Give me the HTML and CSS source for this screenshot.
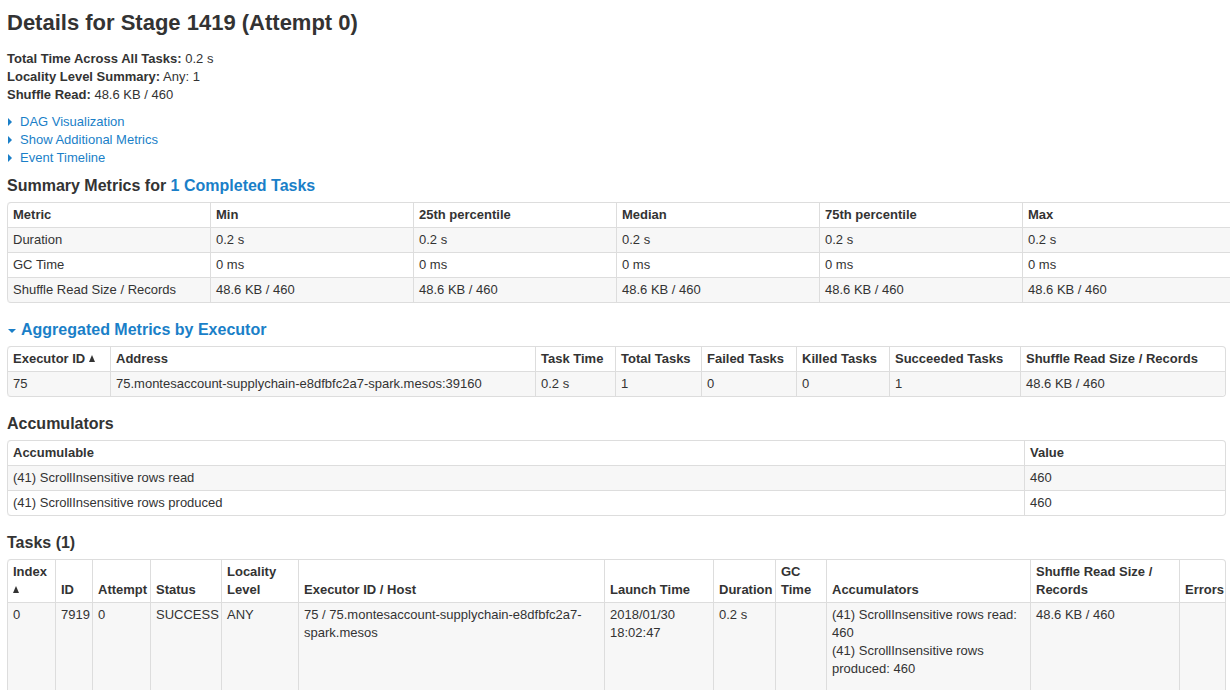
FILE: index.html
```html
<!DOCTYPE html>
<html>
<head>
<meta charset="utf-8">
<link rel="stylesheet" href="styles.css">
<title>Stage 1419</title>
</head>
<body>
<div class="page">
  <h3 class="title">Details for Stage 1419 (Attempt 0)</h3>
  <ul class="summary">
    <li><strong>Total Time Across All Tasks:</strong> 0.2 s</li>
    <li><strong>Locality Level Summary:</strong> Any: 1</li>
    <li><strong>Shuffle Read:</strong> 48.6 KB / 460</li>
  </ul>
  <ul class="toggles">
    <li><span class="arrow-right"></span><a href="#">DAG Visualization</a></li>
    <li><span class="arrow-right"></span><a href="#">Show Additional Metrics</a></li>
    <li><span class="arrow-right"></span><a href="#">Event Timeline</a></li>
  </ul>

  <h4 class="section first">Summary Metrics for <a href="#">1 Completed Tasks</a></h4>
  <table class="tbl t-summary">
    <colgroup><col class="w203"><col class="w203"><col class="w203"><col class="w203"><col class="w203"><col class="w213"></colgroup>
    <thead><tr><th>Metric</th><th>Min</th><th>25th percentile</th><th>Median</th><th>75th percentile</th><th>Max</th></tr></thead>
    <tbody>
      <tr><td>Duration</td><td>0.2 s</td><td>0.2 s</td><td>0.2 s</td><td>0.2 s</td><td>0.2 s</td></tr>
      <tr><td>GC Time</td><td>0 ms</td><td>0 ms</td><td>0 ms</td><td>0 ms</td><td>0 ms</td></tr>
      <tr><td>Shuffle Read Size / Records</td><td>48.6 KB / 460</td><td>48.6 KB / 460</td><td>48.6 KB / 460</td><td>48.6 KB / 460</td><td>48.6 KB / 460</td></tr>
    </tbody>
  </table>

  <h4 class="section link-head"><span class="arrow-down"></span><a href="#">Aggregated Metrics by Executor</a></h4>
  <table class="tbl t-exec">
    <colgroup><col class="e1"><col class="e2"><col class="e3"><col class="e4"><col class="e5"><col class="e6"><col class="e7"><col class="e8"></colgroup>
    <thead><tr><th>Executor ID <span class="sort"></span></th><th>Address</th><th>Task Time</th><th>Total Tasks</th><th>Failed Tasks</th><th>Killed Tasks</th><th>Succeeded Tasks</th><th>Shuffle Read Size / Records</th></tr></thead>
    <tbody>
      <tr><td>75</td><td>75.montesaccount-supplychain-e8dfbfc2a7-spark.mesos:39160</td><td>0.2 s</td><td>1</td><td>0</td><td>0</td><td>1</td><td>48.6 KB / 460</td></tr>
    </tbody>
  </table>

  <h4 class="section">Accumulators</h4>
  <table class="tbl t-acc">
    <colgroup><col class="a1"><col class="a2"></colgroup>
    <thead><tr><th>Accumulable</th><th>Value</th></tr></thead>
    <tbody>
      <tr><td>(41) ScrollInsensitive rows read</td><td>460</td></tr>
      <tr><td>(41) ScrollInsensitive rows produced</td><td>460</td></tr>
    </tbody>
  </table>

  <h4 class="section">Tasks (1)</h4>
  <table class="tbl t-tasks">
    <colgroup><col class="k1"><col class="k2"><col class="k3"><col class="k4"><col class="k5"><col class="k6"><col class="k7"><col class="k8"><col class="k9"><col class="k10"><col class="k11"><col class="k12"></colgroup>
    <thead><tr><th>Index <span class="sort"></span></th><th>ID</th><th>Attempt</th><th>Status</th><th>Locality Level</th><th>Executor ID / Host</th><th>Launch Time</th><th>Duration</th><th>GC Time</th><th>Accumulators</th><th>Shuffle Read Size / Records</th><th>Errors</th></tr></thead>
    <tbody>
      <tr class="tall"><td>0</td><td>7919</td><td>0</td><td>SUCCESS</td><td>ANY</td><td>75 / 75.montesaccount-supplychain-e8dfbfc2a7-spark.mesos</td><td>2018/01/30 18:02:47</td><td>0.2 s</td><td></td><td>(41) ScrollInsensitive rows read: 460<br>(41) ScrollInsensitive rows produced: 460</td><td>48.6 KB / 460</td><td></td></tr>
    </tbody>
  </table>
</div>
</body>
</html>
```

FILE: styles.css
```css
html, body {
  margin: 0;
  padding: 0;
  overflow: hidden;
  background: #fff;
}
body {
  font-family: "Liberation Sans", Arial, Helvetica, sans-serif;
  font-size: 13px;
  line-height: 18px;
  color: #333;
}
a {
  color: #1a7fc8;
  text-decoration: none;
}
.page {
  padding: 0 0 0 7px;
}
.title {
  margin: 8px 0 0 0;
  font-size: 22px;
  line-height: 30px;
  font-weight: bold;
  color: #333;
}
.summary, .toggles {
  list-style: none;
  margin: 0;
  padding: 0;
}
.summary {
  margin-top: 12px;
}
.toggles {
  margin-top: 9px;
}
.toggles li {
  display: flex;
  align-items: center;
}
.arrow-right {
  display: inline-block;
  width: 0;
  height: 0;
  border-top: 4px solid transparent;
  border-bottom: 4px solid transparent;
  border-left: 4px solid #1a7fc8;
  margin: 0 8px 0 1px;
}
.arrow-down {
  display: inline-block;
  width: 0;
  height: 0;
  border-left: 4px solid transparent;
  border-right: 4px solid transparent;
  border-top: 4px solid #1a7fc8;
  margin: 0 5px 0 1px;
  vertical-align: middle;
}
.section {
  margin: 17px 0 6px 0;
  font-size: 16px;
  line-height: 20px;
  font-weight: bold;
  color: #333;
}
.section.first {
  margin-top: 9px;
}
.tbl {
  table-layout: fixed;
  border-collapse: separate;
  border-spacing: 0;
  border: 1px solid #ddd;
  border-left: 0;
  border-radius: 4px;
  font-size: 13px;
  line-height: 18px;
}
.tbl th, .tbl td {
  padding: 3px 5px;
  text-align: left;
  vertical-align: top;
  border-top: 1px solid #ddd;
  border-left: 1px solid #ddd;
  overflow: hidden;
}
.tbl thead tr:first-child th {
  border-top: 0;
}
.tbl th {
  font-weight: bold;
  vertical-align: bottom;
  color: #333;
}
.tbl tbody tr:nth-child(odd) td {
  background: #f7f7f7;
}
.tbl thead tr:first-child th:first-child { border-top-left-radius: 4px; }
.tbl thead tr:first-child th:last-child { border-top-right-radius: 4px; }
.tbl tbody tr:last-child td:first-child { border-bottom-left-radius: 4px; }
.tbl tbody tr:last-child td:last-child { border-bottom-right-radius: 4px; }
.sort {
  display: inline-block;
  width: 0;
  height: 0;
  border-left: 3.5px solid transparent;
  border-right: 3.5px solid transparent;
  border-bottom: 7px solid #333;
  vertical-align: 1px;
}

.t-summary { width: 1228px; }
.w203 { width: 203px; }
.w213 { width: 213px; }

.t-exec { width: 1219px; }
.e1 { width: 103px; }
.e2 { width: 425px; }
.e3 { width: 80px; }
.e4 { width: 86px; }
.e5 { width: 95px; }
.e6 { width: 93px; }
.e7 { width: 131px; }
.e8 { width: 205px; }

.t-acc { width: 1219px; }
.a1 { width: 1017px; }
.a2 { width: 201px; }

.t-tasks { width: 1219px; }
.k1 { width: 48px; }
.k2 { width: 37px; }
.k3 { width: 58px; }
.k4 { width: 71px; }
.k5 { width: 77px; }
.k6 { width: 306px; }
.k7 { width: 109px; }
.k8 { width: 62px; }
.k9 { width: 51px; }
.k10 { width: 204px; }
.k11 { width: 149px; }
.k12 { width: 46px; }
.t-tasks .tall td {
  height: 120px;
}
```
